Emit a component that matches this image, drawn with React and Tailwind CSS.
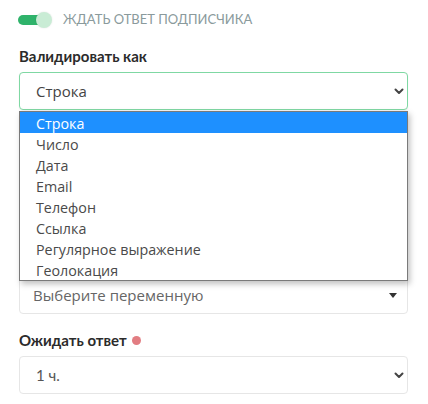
import React from "react";

const Chevron = () => (
  <svg width="10" height="7" viewBox="0 0 10 7" className="shrink-0">
    <polyline points="1.5,1.5 5,5 8.5,1.5" fill="none" stroke="#444" strokeWidth="2" strokeLinecap="round" strokeLinejoin="round" />
  </svg>
);

const options = [
  "Строка",
  "Число",
  "Дата",
  "Email",
  "Телефон",
  "Ссылка",
  "Регулярное выражение",
  "Геолокация",
];

export default function App() {
  return (
    <div className="relative w-[428px] h-[404px] overflow-hidden bg-white font-['Lato',sans-serif]">
      <div className="flex flex-col pl-[19px] pr-[20px]">
        {/* toggle row */}
        <div className="flex items-center h-[16px] mt-[12px] -ml-[1px]">
          <div className="relative w-[34px] h-[16px]">
            <div className="absolute left-0 top-[3px] w-[30px] h-[10px] rounded-full bg-[#2fb36b]" />
            <div className="absolute left-[18px] top-0 w-[16px] h-[16px] rounded-full bg-[#c9ecd5] shadow-[0_0_2px_rgba(0,0,0,0.1)]" />
          </div>
          <span className="ml-[11px] text-[13px] text-[#8a9a9c] uppercase">Ждать ответ подписчика</span>
        </div>

        <div className="mt-[18px] text-[15px] font-bold text-[#2b2b2b] leading-[20px]">Валидировать как</div>

        <div className="mt-[6px] h-[38px] flex items-center justify-between rounded-[4px] border border-[#7fd8a3] bg-white pl-[16px] pr-[3px] shadow-[0_1px_2px_rgba(0,0,0,0.06)]">
          <span className="text-[15px] text-[#444] font-['Open_Sans',sans-serif]">Строка</span>
          <Chevron />
        </div>

        {/* area behind dropdown */}
        <div className="h-[166px]" />

        <div className="h-[38px] flex items-center justify-between rounded-[4px] border border-[#e6e6e6] bg-white pl-[13px] pr-[10px]">
          <span className="text-[15px] text-[#666] font-['Open_Sans',sans-serif]">Выберите переменную</span>
          <svg width="8" height="5" viewBox="0 0 8 5"><polygon points="0,0 8,0 4,5" fill="#333" /></svg>
        </div>

        <div className="mt-[17px] flex items-center h-[18px]">
          <span className="text-[15px] font-bold text-[#2b2b2b]">Ожидать ответ</span>
          <span className="ml-[5px] w-[9px] h-[9px] rounded-full bg-[#e27d82]" />
        </div>

        <div className="mt-[7px] h-[38px] flex items-center justify-between rounded-[4px] border border-[#e6e6e6] bg-white pl-[16px] pr-[3px]">
          <span className="text-[15px] text-[#555]">1 ч.</span>
          <Chevron />
        </div>
      </div>

      {/* open dropdown */}
      <div className="absolute left-[19px] top-[111px] w-[389px] border border-[#7a7a7a] bg-white shadow-[2px_3px_6px_rgba(0,0,0,0.25)] font-['Open_Sans',sans-serif]">
        {options.map((o, i) => (
          <div
            key={o}
            className={
              i === 0
                ? "h-[21px] pt-[1px] leading-[21px] pl-[16px] text-[14.3px] bg-[#1e90ff] text-white"
                : "h-[21px] pt-[1px] leading-[21px] pl-[16px] text-[14.3px] text-[#4a4a4a]"
            }
          >
            {o}
          </div>
        ))}
      </div>
    </div>
  );
}
